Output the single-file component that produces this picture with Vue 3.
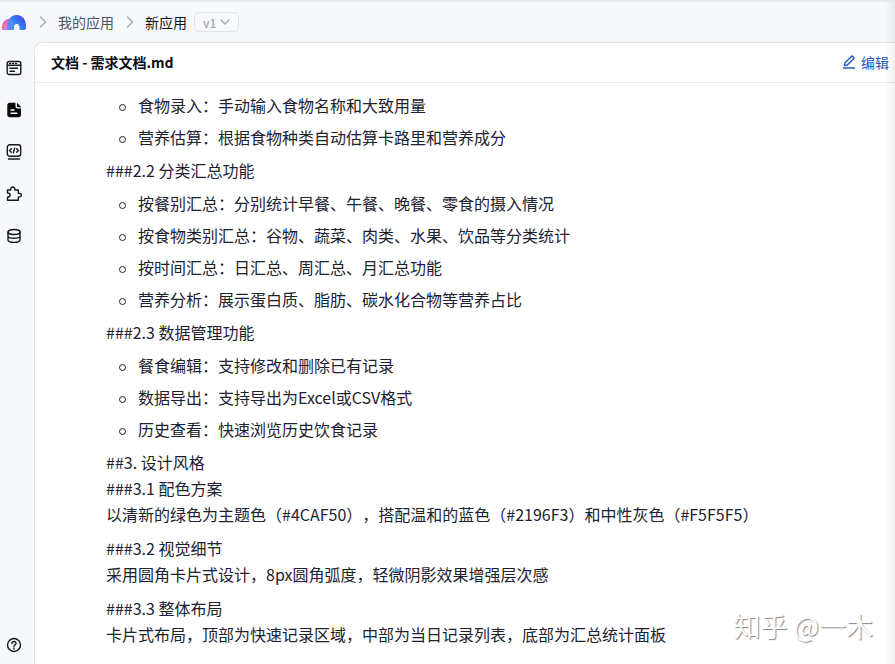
<script setup>
const blocks = [
  { type: 'list', items: ['食物录入：手动输入食物名称和大致用量', '营养估算：根据食物种类自动估算卡路里和营养成分'] },
  { type: 'line', text: '###2.2 分类汇总功能' },
  {
    type: 'list',
    items: [
      '按餐别汇总：分别统计早餐、午餐、晚餐、零食的摄入情况',
      '按食物类别汇总：谷物、蔬菜、肉类、水果、饮品等分类统计',
      '按时间汇总：日汇总、周汇总、月汇总功能',
      '营养分析：展示蛋白质、脂肪、碳水化合物等营养占比',
    ],
  },
  { type: 'line', text: '###2.3 数据管理功能' },
  {
    type: 'list',
    items: ['餐食编辑：支持修改和删除已有记录', '数据导出：支持导出为Excel或CSV格式', '历史查看：快速浏览历史饮食记录'],
  },
  { type: 'line', text: '##3. 设计风格' },
  { type: 'line', text: '###3.1 配色方案' },
  { type: 'para', text: '以清新的绿色为主题色（#4CAF50），搭配温和的蓝色（#2196F3）和中性灰色（#F5F5F5）' },
  { type: 'line', text: '###3.2 视觉细节' },
  { type: 'para', text: '采用圆角卡片式设计，8px圆角弧度，轻微阴影效果增强层次感' },
  { type: 'line', text: '###3.3 整体布局' },
  { type: 'para', text: '卡片式布局，顶部为快速记录区域，中部为当日记录列表，底部为汇总统计面板' },
]
</script>

<template>
  <div class="app">
    <header class="topbar">
      <a class="logo" href="#" aria-label="首页">
        <svg width="26" height="18" viewBox="0 0 26 18">
          <defs>
            <linearGradient id="arch" x1="0" y1="1" x2="1" y2="0.2">
              <stop offset="0" stop-color="#4fd0ff" />
              <stop offset="0.45" stop-color="#3a8cf8" />
              <stop offset="1" stop-color="#3a3fe0" />
            </linearGradient>
            <linearGradient id="petal" x1="0" y1="0" x2="0.6" y2="1">
              <stop offset="0" stop-color="#e84f9a" />
              <stop offset="0.6" stop-color="#f572b4" />
              <stop offset="1" stop-color="#b98cf5" />
            </linearGradient>
          </defs>
          <path d="M1 17C0 11 3 6 9 5.500L12 17Z" fill="url(#petal)" />
          <path d="M6 17C6 8 9 2 15.500 2C22 2 25 7 25 13V15Q25 17 23 17H18.500V15C18.500 12.500 17.500 11 15.800 11C13.500 11 13 13 13 17Z" fill="url(#arch)" />
          <path d="M6 17C6 12 6.500 8.500 9 5.500C11.500 8 12.500 12 13 17Z" fill="#5a8cf8" />
        </svg>
      </a>
      <svg class="sep" width="8" height="12" viewBox="0 0 8 12"><path d="M1.500 1L6.500 6L1.500 11" /></svg>
      <a class="crumb" href="#">我的应用</a>
      <svg class="sep" width="8" height="12" viewBox="0 0 8 12"><path d="M1.500 1L6.500 6L1.500 11" /></svg>
      <span class="crumb current">新应用</span>
      <button class="version" type="button">
        v1
        <svg width="10" height="6" viewBox="0 0 10 6"><path d="M1 1L5 5L9 1" /></svg>
      </button>
    </header>

    <div class="body">
      <nav class="rail">
        <button type="button" aria-label="页面">
          <svg viewBox="0 0 16 16">
            <rect x="1.200" y="1.500" width="13.600" height="13" rx="2" />
            <path d="M1.500 5.300H14.500M4 8.300H11.500M4 11.300H8.500" />
            <path d="M3.500 3.400H4.500M6.500 3.400H7.500M9.500 3.400H10.500" />
          </svg>
        </button>
        <button type="button" aria-label="文档">
          <svg viewBox="0 0 16 16">
            <path class="solid" d="M4 .8H9.500V4.500Q9.500 6.500 11.500 6.500H15V12.500Q15 15.200 12.300 15.200H4Q1.300 15.200 1.300 12.500V3.500Q1.300 .8 4 .8Z" />
            <path class="solid" d="M11 .8L15 4.800V5.200H12Q11 5.200 11 4.200Z" />
            <path class="light" d="M5 8H8M5 11.200H11" />
          </svg>
        </button>
        <button type="button" aria-label="代码">
          <svg viewBox="0 0 16 16">
            <rect x="1.300" y=".8" width="13.400" height="11.400" rx="2.500" />
            <path d="M5.300 4.800L3.600 6.500L5.300 8.200M10.700 4.800L12.400 6.500L10.700 8.200M8.600 4.300L7.400 8.700M2.500 15H13.500" />
          </svg>
        </button>
        <button type="button" aria-label="插件">
          <svg viewBox="0 0 16 16">
            <path d="M1.500 4H4.700C4.200 0 9.300 0 8.900 4H12.300V7.200C16.500 6.900 16.500 11.300 12.300 11.100V14.200H1.500V11.300C5 11.200 5 7 1.500 7Z" />
          </svg>
        </button>
        <button type="button" aria-label="数据">
          <svg viewBox="0 0 16 16">
            <ellipse cx="8" cy="4" rx="6" ry="2.500" />
            <path d="M2 4V12C2 15.200 14 15.200 14 12V4M2 8C2 11 14 11 14 8" />
          </svg>
        </button>
        <button class="help" type="button" aria-label="帮助">
          <svg viewBox="0 0 16 16">
            <circle cx="8" cy="8" r="6.500" />
            <path d="M6 6.500C6 3.900 10 3.900 10 6.400C10 7.900 8 7.800 8 9.300M8 10.900V12" />
          </svg>
        </button>
      </nav>

      <main class="panel">
        <div class="panel-head">
          <h1>文档 - 需求文档.md</h1>
          <button class="edit" type="button">
            <svg width="14" height="14" viewBox="0 0 14 14">
              <path d="M3 7.700L9.300 1.400Q10 .8 10.700 1.400L11.600 2.300Q12.200 3 11.600 3.700L5.300 10L2.400 10.600Z" />
              <path d="M1.500 13H12.500" />
            </svg>
            编辑
          </button>
        </div>
        <article class="doc">
          <template v-for="(b, i) in blocks" :key="i">
            <ul v-if="b.type === 'list'">
              <li v-for="item in b.items" :key="item">{{ item }}</li>
            </ul>
            <p v-else :class="b.type">{{ b.text }}</p>
          </template>
        </article>
      </main>
    </div>
    <div class="watermark">知乎 @一木</div>
  </div>
</template>

<style>
body {
  margin: 0;
}
</style>

<style scoped>
.app {
  position: relative;
  box-sizing: border-box;
  display: flex;
  flex-direction: column;
  height: 100vh;
  overflow: hidden;
  border-top: 2px solid #e9eaed;
  background: #f7f8fc;
  color: #1c2230;
  font-family: "Noto Sans CJK SC", sans-serif;
  font-size: 14px;
  text-spacing-trim: space-all;
}
.app::after {
  content: "";
  position: absolute;
  inset: 0 0 0 auto;
  width: 10px;
  background: linear-gradient(to right, transparent, rgba(0, 0, 0, 0.06));
  pointer-events: none;
}
svg {
  display: block;
  flex: none;
  fill: none;
  stroke-linecap: round;
  stroke-linejoin: round;
}
button {
  margin: 0;
  padding: 0;
  border: 0;
  background: none;
  color: inherit;
  font: inherit;
}
.topbar {
  display: flex;
  align-items: center;
  flex: none;
  height: 40px;
  padding-left: 1px;
}
.logo {
  margin-right: 12px;
}
.sep {
  stroke: #a3a7b0;
  stroke-width: 1.2;
}
.crumb {
  margin: 0 12px 0 11px;
  color: #4d5363;
  line-height: 20px;
  text-decoration: none;
}
.crumb.current {
  margin-right: 7px;
  color: #11141c;
}
.version {
  display: flex;
  align-items: center;
  gap: 4px;
  box-sizing: border-box;
  height: 20px;
  padding: 0 8px;
  border: 1px solid #e0e2e8;
  border-radius: 5px;
  color: #a5a8b0;
  font-size: 12px;
  font-weight: 500;
}
.version svg {
  stroke: #a5a8b0;
  stroke-width: 1.4;
}
.body {
  display: flex;
  flex: 1;
  min-height: 0;
}
.rail {
  display: flex;
  flex-direction: column;
  gap: 26px;
  flex: none;
  width: 28px;
  padding: 18px 6px 11px 0;
}
.rail button {
  display: flex;
  justify-content: center;
}
.rail svg {
  width: 16px;
  height: 16px;
  stroke: #15171c;
  stroke-width: 1.4;
}
.rail .solid {
  fill: #050608;
  stroke: none;
}
.rail .light {
  stroke: #fff;
}
.rail .help {
  margin-top: auto;
}
.panel {
  display: flex;
  flex-direction: column;
  flex: 1;
  min-width: 0;
  overflow: hidden;
  border-top: 1px solid #e1e3e8;
  border-left: 1px solid #e1e3e8;
  border-top-left-radius: 8px;
  background: #fff;
}
.panel-head {
  display: flex;
  align-items: center;
  justify-content: space-between;
  box-sizing: border-box;
  flex: none;
  height: 40px;
  padding: 0 6px 2px 16px;
  border-bottom: 1px solid #e7e8ec;
}
h1 {
  margin: 0;
  color: #0b0d12;
  font-size: 14px;
  font-weight: 700;
  line-height: 20px;
}
.edit {
  display: flex;
  align-items: center;
  gap: 5px;
  color: #2159b8;
  line-height: 20px;
}
.edit svg {
  stroke: #2159b8;
  stroke-width: 1.4;
}
.doc {
  flex: 1;
  min-height: 0;
  overflow: hidden;
  padding: 9px 71px 0;
  font-size: 16px;
  line-height: 26px;
}
.doc ul {
  display: flex;
  flex-direction: column;
  gap: 6px;
  margin: 0 0 7px;
  padding-left: 32px;
  list-style: none;
}
.doc .line + ul {
  margin-top: 7px;
}
.doc li {
  display: flex;
  align-items: center;
}
.doc li::before {
  content: "";
  box-sizing: border-box;
  flex: none;
  width: 7px;
  height: 7px;
  margin: 4px 12px 0 -19px;
  border: 1px solid #1c2230;
  border-radius: 50%;
}
.doc p {
  margin: 0;
}
.doc .para {
  margin-bottom: 8px;
}
.watermark {
  position: absolute;
  right: 22px;
  bottom: 19px;
  color: #fff;
  font-size: 27px;
  line-height: 38px;
  text-shadow: 1px 1px 1px #888;
  pointer-events: none;
}
</style>
